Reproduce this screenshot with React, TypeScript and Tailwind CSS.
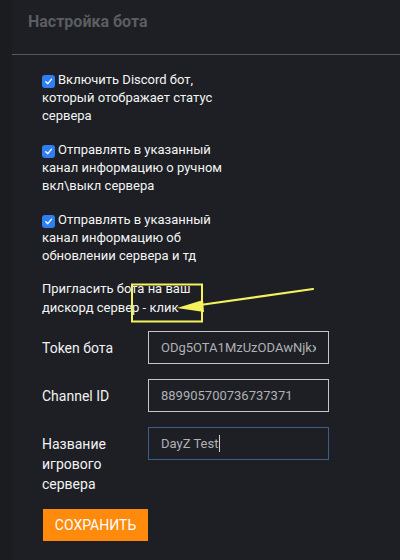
import React from 'react'

function Check() {
  return (
    <span className="inline-flex items-center justify-center w-[13px] h-[13px] rounded-[3px] bg-[#2f7ff2] mr-[3px] align-[-2px]">
      <svg width="9" height="9" viewBox="0 0 10 10" fill="none">
        <path d="M2 5.3 L4.2 7.4 L8.2 2.6" stroke="white" strokeWidth="1.6" strokeLinecap="round" strokeLinejoin="round" />
      </svg>
    </span>
  )
}

function Field({ label, value, active }: { label: string; value: string; active?: boolean }) {
  return (
    <div className="flex items-start mb-[15px]">
      <div className="w-[106px] pr-[14px] pt-[7px] text-[14px] leading-[20px] text-[#f2f2f2]">{label}</div>
      {active ? (
        <div className="w-[181px] h-[33px] px-[12px] flex items-center whitespace-nowrap text-[13px] text-[#afb1b4] border border-[#3b5f8a]">
          {value}
          <span className="inline-block w-px h-[17px] bg-[#d0d0d0] ml-px" />
        </div>
      ) : (
        <input
          readOnly
          value={value}
          className="w-[181px] h-[33px] px-[12px] bg-transparent outline-none text-[13px] text-[#afb1b4] border border-[#c6c6c6]"
        />
      )}
    </div>
  )
}

export default function App() {
  return (
    <div className="relative w-[400px] h-[560px] flex bg-[#1a1c20] font-['Roboto',sans-serif] overflow-hidden">
      <div className="w-3" />
      <div className="flex-1 bg-[#1d1f24]">
        {/* Heading */}
        <div className="h-[55px] pl-4 pt-[11px] border-b border-[#58595c]">
          <h3 className="text-[16px] leading-[22px] font-bold text-[#5b5d61]">Настройка бота</h3>
        </div>

        <div className="pl-[30px] pt-4 text-[13px] text-[#f4f4f4]">
          <div className="w-[190px] leading-[18px] mb-4">
            <Check />Включить Discord бот, который отображает статус сервера
          </div>
          <div className="w-[190px] leading-[18px] mb-4">
            <Check />Отправлять в указанный канал информацию о ручном вкл\выкл сервера
          </div>
          <div className="w-[190px] leading-[18px] mb-[14px]">
            <Check />Отправлять в указанный канал информацию об обновлении сервера и тд
          </div>
          <div className="w-[190px] leading-[19px] mb-[14px]">
            Пригласить бота на ваш дискорд сервер - клик
          </div>

          <Field label="Token бота" value="ODg5OTA1MzUzODAwNjkxMTQ5.YUiT" />
          <Field label="Channel ID" value="889905700736737371" />
          <Field label="Название игрового сервера" value="DayZ Test" active />

          <button className="ml-px w-[105px] h-[32px] bg-[#ff8a0b] text-white text-[14px] uppercase">
            Сохранить
          </button>
        </div>
      </div>

      {/* annotation */}
      <svg className="absolute top-0 left-0 pointer-events-none" width="400" height="560">
        <rect x="132" y="284.5" width="70" height="37" fill="none" stroke="#f4f25c" strokeWidth="2" />
        <line x1="313" y1="289" x2="200" y2="305" stroke="#f4f25c" strokeWidth="2.2" strokeLinecap="round" />
        <polygon points="177,308 203,300 204,312" fill="#f4f25c" />
      </svg>
    </div>
  )
}
